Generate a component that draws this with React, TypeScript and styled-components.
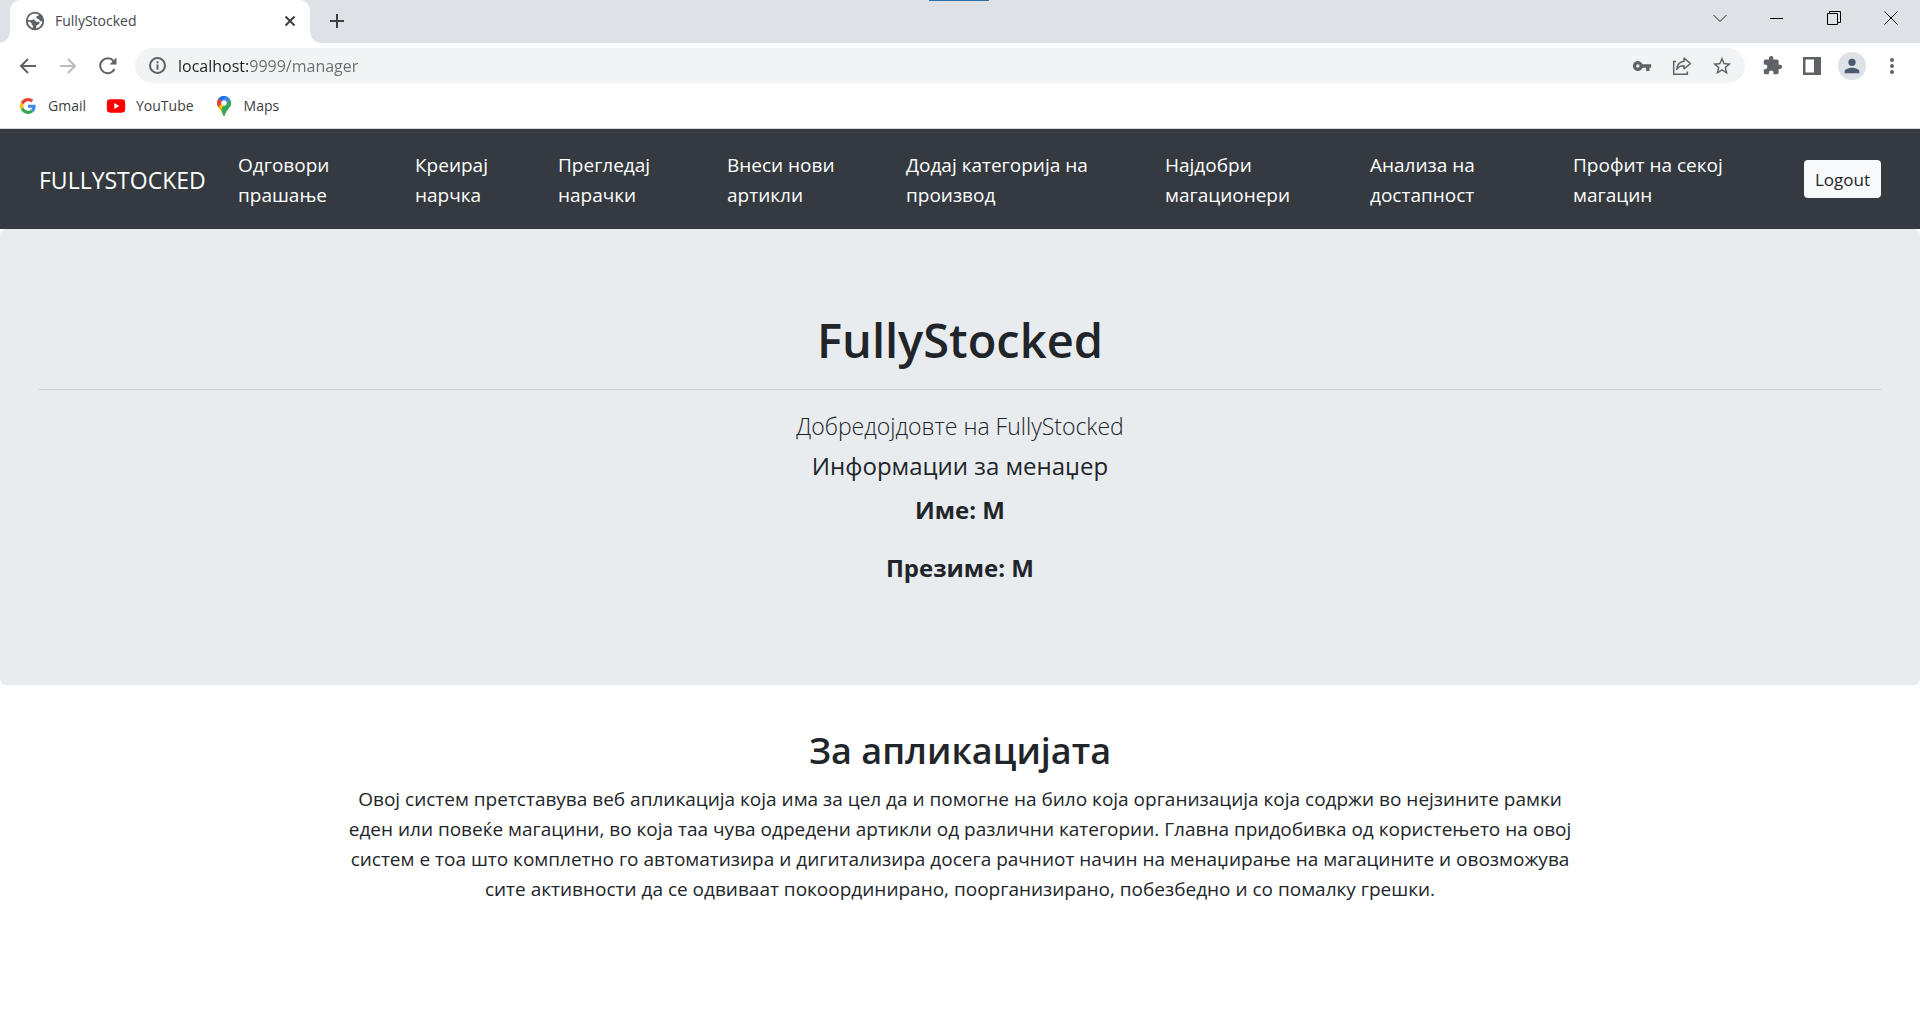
import React from "react";
import styled, { createGlobalStyle } from "styled-components";

const GlobalStyle = createGlobalStyle`
  *, *::before, *::after { box-sizing: border-box; }
  body {
    margin: 0;
    background: #fff;
    color: #212529;
    font-family: "Open Sans", "Noto Sans", sans-serif;
    font-size: 19px;
    line-height: 30px;
  }
  button, input { font-family: inherit; }
`;

const IconButton = styled.button<{ $width?: number; $color?: string }>`
  display: flex;
  align-items: center;
  justify-content: center;
  flex: none;
  width: ${(p) => p.$width ?? 40}px;
  height: 32px;
  padding: 0;
  border: 0;
  background: transparent;
  color: ${(p) => p.$color ?? "#5f6368"};
`;

/* Browser frame */
const TabStrip = styled.div`
  position: relative;
  display: flex;
  height: 43px;
  padding-left: 10px;
  background: #dee1e6;
`;

const LoadingMark = styled.div`
  position: absolute;
  top: 0;
  left: calc(50% - 31px);
  width: 60px;
  height: 1px;
  background: #2f6ea5;
`;

const Tab = styled.div`
  position: relative;
  display: flex;
  align-items: center;
  gap: 9px;
  width: 300px;
  padding: 0 6px 2px 14px;
  border-radius: 10px 10px 0 0;
  background: #fff;
  color: #45494d;

  &::before,
  &::after {
    content: "";
    position: absolute;
    bottom: 0;
    width: 10px;
    height: 10px;
  }
  &::before {
    left: -10px;
    background: radial-gradient(circle at 0 0, #dee1e6 9px, #fff 10px);
  }
  &::after {
    right: -10px;
    background: radial-gradient(circle at 100% 0, #dee1e6 9px, #fff 10px);
  }
`;

const TabTitle = styled.span`
  flex: 1;
  font-size: 14px;
  line-height: 20px;
`;

const NewTab = styled(IconButton)`
  margin: 5px 0 0 7px;
`;

const WindowControls = styled.div`
  display: flex;
  align-items: center;
  margin-left: auto;
  height: 36px;
`;

const Toolbar = styled.div`
  display: flex;
  align-items: center;
  height: 45px;
  padding: 0 8px;
`;

const AddressBar = styled.label`
  display: flex;
  align-items: center;
  flex: 1;
  height: 35px;
  margin: 0 7px;
  padding: 0 3px 0 14px;
  border-radius: 18px;
  background: #f1f3f4;
`;

const AddressInput = styled.input`
  flex: 1;
  min-width: 0;
  height: 30px;
  margin-left: 12px;
  padding: 0;
  border: 0;
  outline: 0;
  font-size: 16px;
  color: transparent;
  background: linear-gradient(to right, #202124 70px, #6a6e72 70px);
  background-clip: text;
`;

const Avatar = styled.span`
  display: flex;
  align-items: center;
  justify-content: center;
  width: 28px;
  height: 28px;
  border-radius: 50%;
  background: #dee1e6;
  color: #4b5a70;
`;

const Bookmarks = styled.div`
  display: flex;
  align-items: center;
  gap: 20px;
  height: 41px;
  padding: 0 18px 4px;
  border-bottom: 1px solid #d5d7da;
`;

const Bookmark = styled.a`
  display: flex;
  align-items: center;
  gap: 10px;
  color: #3c4043;
  font-size: 14px;
  line-height: 20px;
  text-decoration: none;
`;

/* Page */
const NavBar = styled.header`
  display: flex;
  align-items: center;
  min-height: 100px;
  padding: 10px 39px;
  background: #343a40;
`;

const Brand = styled.a`
  flex: none;
  width: 199px;
  padding-top: 2px;
  color: #fff;
  font-size: 23px;
  line-height: 36px;
  text-decoration: none;
`;

const Menu = styled.nav`
  display: grid;
  flex: 1;
  grid-template-columns: 177fr 143fr 169fr 179fr 259fr 205fr 203fr 231fr;
  padding-top: 2px;
`;

const MenuLink = styled.a`
  color: #fff;
  font-size: 19px;
  font-weight: 500;
  line-height: 30px;
  text-decoration: none;
`;

const LogoutButton = styled.button`
  flex: none;
  width: 77px;
  height: 38px;
  padding: 0;
  border: 0;
  border-radius: 4px;
  background: #f8f9fa;
  color: #212529;
  font-size: 17px;
`;

const Hero = styled.section`
  display: flex;
  flex-direction: column;
  padding: 80px 39px 83px;
  border-radius: 6px;
  background: #e9ecef;
  text-align: center;
`;

const HeroTitle = styled.h1`
  margin: 0;
  font-size: 47px;
  font-weight: 600;
  line-height: 62px;
`;

const Divider = styled.hr`
  width: 100%;
  margin: 18px 0 16px;
  border: 0;
  border-top: 1px solid #cfd2d5;
`;

const HeroText = styled.p<{ $light?: boolean }>`
  margin: 0;
  font-size: ${(p) => (p.$light ? 23 : 24)}px;
  font-weight: ${(p) => (p.$light ? 300 : 400)};
  line-height: 40px;
`;

const Fact = styled.p`
  margin: 4px 0 14px;
  font-size: 24px;
  font-weight: 700;
  line-height: 40px;
`;

const About = styled.section`
  max-width: 1260px;
  margin: 0 auto;
  padding: 41px 10px;
  text-align: center;
`;

const AboutTitle = styled.h2`
  margin: 0 0 8px;
  font-size: 36px;
  font-weight: 600;
  line-height: 50px;
`;

const AboutText = styled.p`
  margin: 0;
`;

const menu = [
  "Одговори прашање",
  "Креирај нарчка",
  "Прегледај нарачки",
  "Внеси нови артикли",
  "Додај категорија на производ",
  "Најдобри магационери",
  "Анализа на достапност",
  "Профит на секој магацин",
];

const breakBeforeLast = (label: string) => {
  const at = label.lastIndexOf(" ");
  return (
    <>
      {label.slice(0, at)}
      <br />
      {label.slice(at + 1)}
    </>
  );
};

const Svg = ({ size = 20, box = 24, children }: { size?: number; box?: number; children: React.ReactNode }) => (
  <svg width={size} height={size} viewBox={`0 0 ${box} ${box}`} fill="currentColor" aria-hidden="true">
    {children}
  </svg>
);

const stroke = (width: number) => ({ fill: "none", stroke: "currentColor", strokeWidth: width });

const Globe = () => (
  <Svg size={22}>
    <circle cx="12" cy="12" r="10" fill="#5f6368" />
    <path fill="#fff" d="M10.500 4.200C7 5 4.800 7.300 4.200 10.500c1.600.9 3.600.9 5 .2 1.300-.7 2.600-.4 3 .8.300 1.200 1.500 1.500 2.800 1.200 1.500-.3 2.500.5 1.800 1.900-.8 1.500-2.600 1.500-3.300 2.800-.4.800-.3 1.700-.2 2.400 3.700-.6 6.500-3.800 6.600-7.600-1.800.3-2.900-.5-3.400-1.700-.5-1.300-2.200-.8-3-1.800-.9-1.100.1-2 1.500-2.200.9-.2 1-1 .7-1.800-1.500-.7-3.500-.9-5.200-.5z" />
    <path fill="#fff" d="M4.100 12.800c.4 3.200 2.500 5.700 5.400 6.800.5-1.200.3-2.400-.5-3.200-.9-.8-.5-2.200-1.600-2.900-.9-.6-2.200-.7-3.300-.7z" />
  </Svg>
);

const Google = () => (
  <Svg size={20} box={60}>
    <g transform="translate(6 6)">
      <path fill="#EA4335" d="M24 9.500c3.540 0 6.710 1.220 9.210 3.600l6.850-6.850C35.900 2.380 30.470 0 24 0 14.620 0 6.510 5.380 2.560 13.220l7.980 6.190C12.430 13.720 17.740 9.500 24 9.500z" />
      <path fill="#4285F4" d="M46.980 24.550c0-1.570-.15-3.090-.38-4.550H24v9.020h12.940c-.58 2.960-2.260 5.480-4.780 7.180l7.730 6c4.510-4.180 7.090-10.360 7.090-17.650z" />
      <path fill="#FBBC05" d="M10.530 28.590A14.500 14.500 0 0 1 9.770 24c0-1.600.27-3.140.76-4.590l-7.980-6.190A23.900 23.900 0 0 0 0 24c0 3.880.92 7.540 2.560 10.780l7.970-6.190z" />
      <path fill="#34A853" d="M24 48c6.480 0 11.930-2.130 15.890-5.810l-7.730-6c-2.150 1.450-4.920 2.300-8.160 2.300-6.260 0-11.570-4.220-13.470-9.910l-7.980 6.190C6.510 42.620 14.620 48 24 48z" />
    </g>
  </Svg>
);

const YouTube = () => (
  <Svg size={20}>
    <rect x="1" y="4" width="22" height="16" rx="4" fill="#f00" />
    <path fill="#fff" d="M10 8.500v7l6-3.500z" />
  </Svg>
);

const MapsPin = () => (
  <svg width="20" height="20" viewBox="0 0 20 20" aria-hidden="true">
    <defs>
      <clipPath id="pin">
        <path d="M10 0a7 7 0 0 0-7 7c0 5 5 6.500 6.200 12.200q.8 1.500 1.600 0C12 13.500 17 12 17 7a7 7 0 0 0-7-7z" />
      </clipPath>
    </defs>
    <g clipPath="url(#pin)">
      <rect width="20" height="20" fill="#34a853" />
      <path fill="#fbbc04" d="M0 14 10 5l5 4L7 18z" />
      <path fill="#4285f4" d="M4 0h14L10 9.500 5 4z" />
      <path fill="#1a73e8" d="M4 0h8L7 6 4 3.500z" />
      <path fill="#ea4335" d="m4 2 5 4-6 6.500L0 8z" />
      <path fill="#34a853" d="M15 3 8 12l-1 8h12V3z" />
      <path fill="#4285f4" d="m12 .5 4.200 3.200L10 10z" />
    </g>
    <circle cx="10" cy="7" r="2.700" fill="#fff" />
  </svg>
);

export default function App() {
  return (
    <>
      <GlobalStyle />
      <TabStrip>
        <LoadingMark />
        <Tab>
          <Globe />
          <TabTitle>FullyStocked</TabTitle>
          <IconButton $width={28} $color="#3c4043" aria-label="Close tab">
            <Svg size={12} box={12}><path {...stroke(2)} d="m1.500 1.500 9 9m0-9-9 9" /></Svg>
          </IconButton>
        </Tab>
        <NewTab $color="#3c4043" aria-label="New tab">
          <Svg size={16} box={16}><path {...stroke(2)} d="M8 1v14M1 8h14" /></Svg>
        </NewTab>
        <WindowControls>
          <IconButton $width={57} $color="#222" aria-label="Search tabs">
            <Svg size={14} box={14}><path {...stroke(1)} d="m.5 4 6.500 6.500L13.500 4" /></Svg>
          </IconButton>
          <IconButton $width={57} $color="#000" aria-label="Minimize">
            <Svg size={14} box={14}><path d="M0 7h13v1H0z" /></Svg>
          </IconButton>
          <IconButton $width={57} $color="#000" aria-label="Restore">
            <Svg size={14} box={14}><path {...stroke(1)} d="M.5 2.500h10v11H.5zM2.500 2.500v-2h11v11h-3" /></Svg>
          </IconButton>
          <IconButton $width={58} $color="#000" aria-label="Close">
            <Svg size={14} box={14}><path {...stroke(1)} d="m.5.5 13 13m0-13-13 13" /></Svg>
          </IconButton>
        </WindowControls>
      </TabStrip>

      <Toolbar>
        <IconButton aria-label="Back">
          <Svg size={18} box={18}><path {...stroke(2)} d="M17 9H2m7-7L2 9l7 7" /></Svg>
        </IconButton>
        <IconButton $color="#b9bbbe" aria-label="Forward">
          <Svg size={18} box={18}><path {...stroke(2)} d="M1 9h15M9 2l7 7-7 7" /></Svg>
        </IconButton>
        <IconButton aria-label="Reload">
          <Svg size={18} box={18}>
            <path {...stroke(2)} d="M15.500 12A7.500 7.500 0 1 1 14.500 4" />
            <path d="M17.500.5v7h-7z" />
          </Svg>
        </IconButton>
        <AddressBar>
          <Svg size={17} box={17}>
            <circle cx="8.500" cy="8.500" r="7.500" fill="none" stroke="#5f6368" strokeWidth="2" />
            <path fill="#5f6368" d="M7.500 4.200h2v2h-2zM7.500 7.500h2v5.200h-2z" />
          </Svg>
          <AddressInput aria-label="Address" defaultValue="localhost:9999/manager" />
          <IconButton aria-label="Passwords">
            <Svg size={20}><path d="M12.650 10A6 6 0 1 0 12.650 14H17v4h4v-4h2v-4zM7 14a2 2 0 1 1 0-4 2 2 0 0 1 0 4z" /></Svg>
          </IconButton>
          <IconButton aria-label="Share">
            <Svg size={20} box={20}>
              <path {...stroke(1.5)} d="M4 5.500H1.700v12.800h13.600V15.500" />
              <path {...stroke(1.5)} strokeLinejoin="round" d="M12 2.200 18.500 7.500 12 12.800V9.800c-3.500 0-5.800 1-7.300 3.700.3-4.500 2.800-7.600 7.300-8.300z" />
            </Svg>
          </IconButton>
          <IconButton aria-label="Bookmark this page">
            <Svg size={22}><path d="m22 9.240-7.190-.62L12 2 9.190 8.630 2 9.240l5.460 4.730L5.820 21 12 17.270 18.180 21l-1.630-7.030zM12 15.400l-3.760 2.270 1-4.280-3.320-2.880 4.380-.38L12 6.100l1.710 4.040 4.380.38-3.320 2.880 1 4.280z" /></Svg>
          </IconButton>
        </AddressBar>
        <IconButton aria-label="Extensions">
          <Svg size={21}><path d="M20.500 11H19V7a2 2 0 0 0-2-2h-4V3.500a2.500 2.500 0 0 0-5 0V5H4a2 2 0 0 0-2 2v3.800h1.500a2.700 2.700 0 0 1 0 5.400H2V20a2 2 0 0 0 2 2h3.800v-1.500a2.700 2.700 0 0 1 5.400 0V22H17a2 2 0 0 0 2-2v-4h1.500a2.500 2.500 0 0 0 0-5z" /></Svg>
        </IconButton>
        <IconButton aria-label="Side panel">
          <Svg size={18} box={18}><path fillRule="evenodd" d="M0 0h18v18H0zM2.500 2.500v13h8.500v-13z" /></Svg>
        </IconButton>
        <IconButton aria-label="Profile">
          <Avatar>
            <Svg size={22}><path d="M12 12a4 4 0 1 0 0-8 4 4 0 0 0 0 8zm0 2c-2.670 0-8 1.340-8 4v2h16v-2c0-2.660-5.330-4-8-4z" /></Svg>
          </Avatar>
        </IconButton>
        <IconButton aria-label="Menu">
          <Svg size={18} box={18}>
            <circle cx="9" cy="3" r="2" />
            <circle cx="9" cy="9" r="2" />
            <circle cx="9" cy="15" r="2" />
          </Svg>
        </IconButton>
      </Toolbar>

      <Bookmarks>
        <Bookmark href="#gmail"><Google />Gmail</Bookmark>
        <Bookmark href="#youtube"><YouTube />YouTube</Bookmark>
        <Bookmark href="#maps"><MapsPin />Maps</Bookmark>
      </Bookmarks>

      <NavBar>
        <Brand href="#home">FULLYSTOCKED</Brand>
        <Menu>
          {menu.map((label) => (
            <MenuLink key={label} href="#manager">{breakBeforeLast(label)}</MenuLink>
          ))}
        </Menu>
        <LogoutButton>Logout</LogoutButton>
      </NavBar>

      <main>
        <Hero>
          <HeroTitle>FullyStocked</HeroTitle>
          <Divider />
          <HeroText $light>Добредојдовте на FullyStocked</HeroText>
          <HeroText>Информации за менаџер</HeroText>
          <Fact>Име: М</Fact>
          <Fact>Презиме: М</Fact>
        </Hero>
        <About>
          <AboutTitle>За апликацијата</AboutTitle>
          <AboutText>
            Овој систем претставува веб апликација која има за цел да и помогне на било која организација која содржи во нејзините рамки
            еден или повеќе магацини, во која таа чува одредени артикли од различни категории. Главна придобивка од користењето на овој
            систем е тоа што комплетно го автоматизира и дигитализира досега рачниот начин на менаџирање на магацините и овозможува
            сите активности да се одвиваат покоординирано, поорганизирано, побезбедно и со помалку грешки.
          </AboutText>
        </About>
      </main>
    </>
  );
}
